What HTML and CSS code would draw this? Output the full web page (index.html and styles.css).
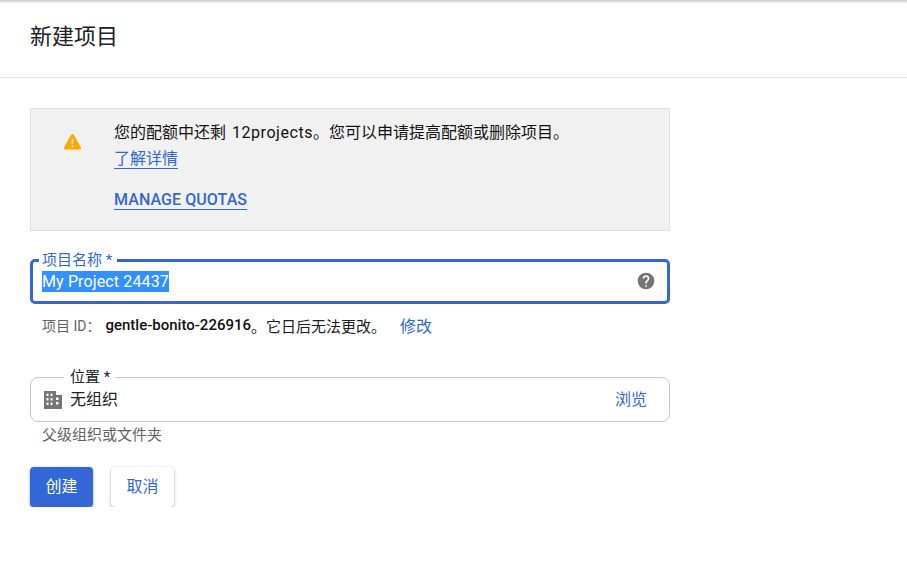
FILE: index.html
```html
<!DOCTYPE html>
<html lang="zh-CN">
<head>
<meta charset="utf-8">
<title>新建项目</title>
<link rel="stylesheet" href="styles.css">
</head>
<body>
<header class="page-header"><h1>新建项目</h1></header>
<main class="content">
  <section class="notice">
    <div class="notice-icon">
      <svg width="19" height="19" viewBox="0 0 24 24"><path fill="#f9ab00" d="M12 2.600c-.7 0-1.300.4-1.700 1L1.400 19.200c-.8 1.300.2 3 1.700 3h17.800c1.500 0 2.500-1.700 1.700-3L13.700 3.600c-.4-.6-1-1-1.700-1z"/><path fill="#f1f1f1" d="M11 9h2v6h-2zM11 16.600h2v2.200h-2z"/></svg>
    </div>
    <div class="notice-body">
      <p class="notice-text">您的配额中还剩 <span class="count">12projects</span>。您可以申请提高配额或删除项目。</p>
      <a class="learn-more">了解详情</a>
      <a class="manage">MANAGE QUOTAS</a>
    </div>
  </section>

  <div class="field field-focus">
    <span class="float-label label-blue">项目名称 *</span>
    <span class="selected">My Project 24437</span>
    <svg class="help" width="20" height="20" viewBox="0 0 24 24"><path fill="#757575" d="M12 2a10 10 0 1 0 0 20 10 10 0 0 0 0-20zm1 17h-2v-2h2v2zm2.100-7.700-.9.9c-.8.7-1.200 1.300-1.200 2.800h-2v-.5c0-1.100.4-2.100 1.200-2.800l1.200-1.300c.4-.3.600-.8.600-1.400a2 2 0 0 0-4 0H8a4 4 0 0 1 8 0c0 .9-.4 1.700-.9 2.300z"/></svg>
  </div>

  <div class="id-row">
    <span class="id-label">项目 ID：</span><span class="id-value">gentle-bonito-226916</span><span class="id-note">。它日后无法更改。</span><a class="edit">修改</a>
  </div>

  <div class="field field-location">
    <span class="float-label label-dark">位置 *</span>
    <svg class="building" width="24" height="24" viewBox="0 0 24 24"><path fill="#757575" fill-rule="evenodd" d="M3 3h12v4h6v14H3V3zm2.500 2.500v2.500h2V5.500h-2zm4 0v2.500h2V5.500h-2zm-4 4.500v2.500h2V10h-2zm4 0v2.500h2V10h-2zm-4 4.500V17h2v-2.500h-2zm4 0V17h2v-2.500h-2zM15 9.500V12h2.500V9.500H15zm0 4.500v2.500h2.500V14H15z"/></svg>
    <span class="location-value">无组织</span>
    <a class="browse">浏览</a>
  </div>
  <p class="hint">父级组织或文件夹</p>

  <div class="actions">
    <button class="btn btn-primary" type="button">创建</button>
    <button class="btn btn-secondary" type="button">取消</button>
  </div>
</main>
</body>
</html>
```
FILE: styles.css
```css
* { box-sizing: border-box; }
html, body { margin: 0; padding: 0; }
body {
  background: #fff;
  color: #000;
  font-family: Roboto, "Noto Sans CJK SC", sans-serif;
  font-size: 14px;
  overflow: hidden;
}
.page-header {
  height: 78px;
  padding: 0 30px;
  display: flex;
  align-items: center;
  border-bottom: 1px solid #e0e0e0;
  background: linear-gradient(#c8c8c8, #e8e8e8 2px, #fff 4px);
}
.page-header h1 {
  margin: 0 0 10px;
  font-size: 22px;
  font-weight: 400;
  color: #202124;
}
.content {
  width: 640px;
  margin-left: 30px;
  padding-top: 30px;
}
.notice {
  height: 123px;
  display: flex;
  background: #f1f1f1;
  border: 1px solid #e0e0e0;
}
.notice-icon {
  width: 83px;
  padding: 23px 0 0 32px;
}
.notice-icon svg { display: block; }
.notice-body {
  display: flex;
  flex-direction: column;
  align-items: flex-start;
  padding-top: 13px;
}
.notice-text {
  margin: 0;
  font-size: 16px;
  line-height: 22px;
  color: #111;
  word-spacing: 2px;
}
.count { letter-spacing: .55px; }
.learn-more {
  margin-top: 5px;
  font-size: 16px;
  line-height: 19px;
  color: #3367d6;
  border-bottom: 1px solid #3367d6;
}
.manage {
  margin-top: 21px;
  font-size: 16px;
  font-weight: 500;
  line-height: 19px;
  letter-spacing: .08px;
  color: #3367d6;
  border-bottom: 1px solid #3367d6;
}
.field {
  position: relative;
  display: flex;
  align-items: center;
  width: 640px;
}
.float-label {
  position: absolute;
  background: #fff;
  font-size: 15px;
  line-height: 20px;
}
.label-blue { top: -12px; left: 6px; padding: 0 5px 0 3px; color: #3367d6; }
.label-dark { top: -11px; left: 33px; padding: 0 6px; color: #202124; }
.field-focus {
  height: 45px;
  margin-top: 28px;
  padding: 0 13px 0 9px;
  border: 3px solid #3367d6;
  border-radius: 5px;
}
.selected {
  background: #3390ff;
  color: #fff;
  font-size: 16px;
  line-height: 21px;
  letter-spacing: .13px;
  margin-top: -1px;
}
.help { margin-left: auto; margin-top: -1px; margin-right: -2px; }
.id-row {
  display: flex;
  align-items: center;
  height: 22px;
  margin-top: 10px;
  padding-left: 12px;
  font-size: 14px;
  color: #5f6368;
}
.id-value { color: #111; font-weight: 500; font-size: 15px; margin-left: 5px; }
.id-note { color: #202124; font-size: 15px; }
.edit { margin-left: 14px; font-size: 16px; color: #3367d6; margin-top: -1px; }
.field-location {
  height: 45px;
  margin-top: 41px;
  padding: 0 22px 0 10px;
  border: 1px solid #c8c8c8;
  border-radius: 8px;
}
.building { flex: none; margin-right: 5px; }
.location-value { font-size: 16px; color: #202124; margin-top: -4px; }
.browse { margin-left: auto; font-size: 16px; color: #3367d6; margin-top: -4px; }
.hint {
  margin: 3px 0 0 12px;
  font-size: 15px;
  line-height: 20px;
  color: #5f6368;
}
.actions {
  display: flex;
  gap: 18px;
  margin-top: 22px;
}
.btn {
  width: 63px;
  height: 40px;
  border: 0;
  border-radius: 4px;
  padding: 0 0 5px;
  font-family: inherit;
  font-size: 16px;
  font-weight: 400;
  box-shadow: 0 1px 2px rgba(60,64,67,.3), 0 1px 3px 1px rgba(60,64,67,.15);
}
.btn-primary { background: #3367d6; color: #fff; }
.btn-secondary { background: #fff; color: #3367d6; }
```
